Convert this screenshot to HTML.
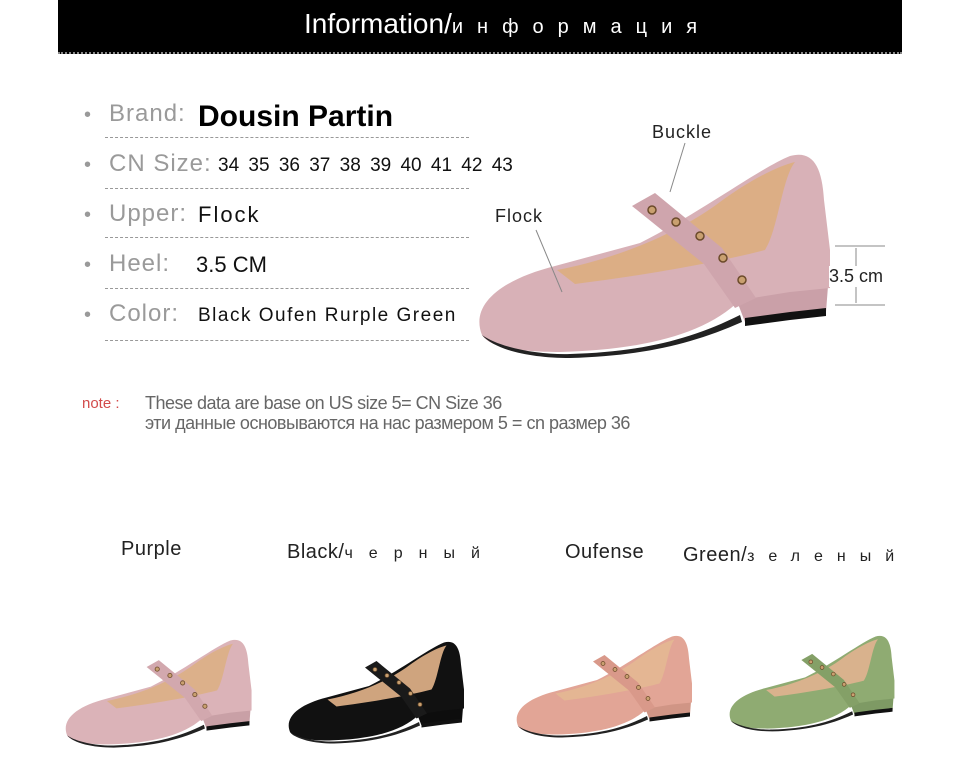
<!DOCTYPE html>
<html><head><meta charset="utf-8"><style>
body{margin:0;width:954px;height:761px;background:#fff;position:relative;overflow:hidden;font-family:"Liberation Sans",sans-serif}
.a{position:absolute;white-space:nowrap}
.hdr{left:58px;top:0;width:844px;height:52px;background:#000;border-bottom:2px dotted #888}
.lab{color:#9a9a9a;font-family:"Liberation Sans Narrow","Liberation Sans",sans-serif;font-size:24px;letter-spacing:1px}
.dot{color:#9a9a9a;font-size:20px}
.ln{border-top:1px dashed #999;height:0}
.val{color:#111;font-size:22px}
.cl{font-size:20px;color:#222;letter-spacing:.5px}
</style></head><body>
<div class="a hdr"></div>
<div class="a" style="left:304px;top:8px;color:#fff;font-size:28px;font-family:'Liberation Sans Narrow','Liberation Sans',sans-serif">Information/<span style="font-size:20px;letter-spacing:14px">информация</span></div>

<div class="a dot" style="left:84px;top:104px">•</div><div class="a lab" style="left:109px;top:100px">Brand:</div><div class="a" style="left:198px;top:100px;font-size:30px;font-weight:bold;color:#000">Dousin Partin</div>
<div class="a ln" style="left:105px;top:137px;width:364px"></div>
<div class="a dot" style="left:84px;top:154px">•</div><div class="a lab" style="left:109px;top:150px">CN Size:</div><div class="a val" style="left:218px;top:155px;font-size:19px;font-family:'Liberation Sans Narrow','Liberation Sans',sans-serif;word-spacing:4px">34 35 36 37 38 39 40 41 42 43</div>
<div class="a ln" style="left:105px;top:188px;width:364px"></div>
<div class="a dot" style="left:84px;top:204px">•</div><div class="a lab" style="left:109px;top:200px">Upper:</div><div class="a val" style="left:198px;top:202px;letter-spacing:2px">Flock</div>
<div class="a ln" style="left:105px;top:237px;width:364px"></div>
<div class="a dot" style="left:84px;top:254px">•</div><div class="a lab" style="left:109px;top:250px">Heel:</div><div class="a val" style="left:196px;top:252px">3.5 CM</div>
<div class="a ln" style="left:105px;top:288px;width:364px"></div>
<div class="a dot" style="left:84px;top:304px">•</div><div class="a lab" style="left:109px;top:300px">Color:</div><div class="a val" style="left:198px;top:305px;font-size:19px;letter-spacing:1.5px">Black Oufen Rurple Green</div>
<div class="a ln" style="left:105px;top:340px;width:364px"></div>

<div class="a" style="left:82px;top:395px;color:#d24b4b;font-size:15px">note :</div>
<div class="a" style="left:145px;top:393px;color:#666;font-size:18px;letter-spacing:-.5px">These data are base on US size 5= CN Size 36</div>
<div class="a" style="left:145px;top:413px;color:#666;font-size:18px;letter-spacing:-.5px">эти данные основываются на нас размером 5 = cn размер 36</div>

<svg class="a" style="left:0;top:0" width="954" height="761">
<defs>
<g id="shoe">
<path d="M735,296 L790,288 L828,286 L826,312 L790,316 L745,322 Z" fill="var(--h)"/>
<path d="M745,318 L790,312 L826,308 L826,316 L790,320 L745,326 Z" fill="#111"/>
<path d="M482,335 C470,305 500,280 555,266 L640,243 C700,213 760,168 790,156 C812,150 822,165 824,200 L830,250 L830,288 L790,292 L740,300 C705,335 640,350 560,352 C510,352 488,345 482,335 Z" fill="var(--c)"/>
<path d="M482,335 C500,348 540,355 570,354 C640,352 690,340 740,315 L742,322 C690,345 640,356 570,358 C530,358 495,350 482,335Z" fill="#222"/>
<path d="M557,270 C620,258 680,232 720,202 C750,180 778,166 795,162 C782,178 778,230 765,250 C720,262 640,276 575,284 Z" fill="var(--i)"/>
<path d="M632,206 L655,193 L722,248 L756,298 L735,308 L704,264 Z" fill="var(--s)"/>
<g fill="#c9a070" stroke="#6b4a2a" stroke-width="1.5"><circle cx="652" cy="210" r="4"/><circle cx="676" cy="222" r="4"/><circle cx="700" cy="236" r="4"/><circle cx="723" cy="258" r="4"/><circle cx="742" cy="280" r="4"/></g>
</g>
</defs>
<use href="#shoe" style="--c:#d8b1b7;--s:#cfa5ad;--h:#caa0a8;--i:#dcae85"/>
<g fill="none" stroke="#888" stroke-width="1"><line x1="685" y1="143" x2="670" y2="192"/><line x1="536" y1="230" x2="562" y2="292"/><line x1="835" y1="246" x2="885" y2="246"/><line x1="835" y1="305" x2="885" y2="305"/><line x1="856" y1="248" x2="856" y2="303"/></g>
<g transform="translate(65,640) scale(0.53) translate(-478,-155)"><use href="#shoe" style="--c:#dbb3b8;--s:#d2a8ae;--h:#c9a0a6;--i:#dcb08a"/></g>
<g transform="translate(288,642) scale(0.5) translate(-478,-155)"><use href="#shoe" style="--c:#111;--s:#1a1a1a;--h:#0d0d0d;--i:#cfa47e"/></g>
<g transform="translate(516,636) scale(0.5) translate(-478,-155)"><use href="#shoe" style="--c:#e2a596;--s:#d9998a;--h:#d09585;--i:#e4b693"/></g>
<g transform="translate(729,636) scale(0.47) translate(-478,-155)"><use href="#shoe" style="--c:#8fab72;--s:#84a067;--h:#7e9a64;--i:#d9b28d"/></g>
</svg>
<div class="a" style="left:652px;top:122px;font-size:18px;color:#222;letter-spacing:1px">Buckle</div>
<div class="a" style="left:495px;top:206px;font-size:18px;color:#222;letter-spacing:1px">Flock</div>
<div class="a" style="left:829px;top:266px;font-size:18px;color:#222;background:#fff">3.5 cm</div>

<div class="a cl" style="left:121px;top:538px">Purple</div>
<div class="a cl" style="left:287px;top:541px">Black/<span style="font-size:16px;letter-spacing:16px">черный</span></div>
<div class="a cl" style="left:565px;top:541px">Oufense</div>
<div class="a cl" style="left:683px;top:544px">Green/<span style="font-size:16px;letter-spacing:14px">зеленый</span></div>
</body></html>
